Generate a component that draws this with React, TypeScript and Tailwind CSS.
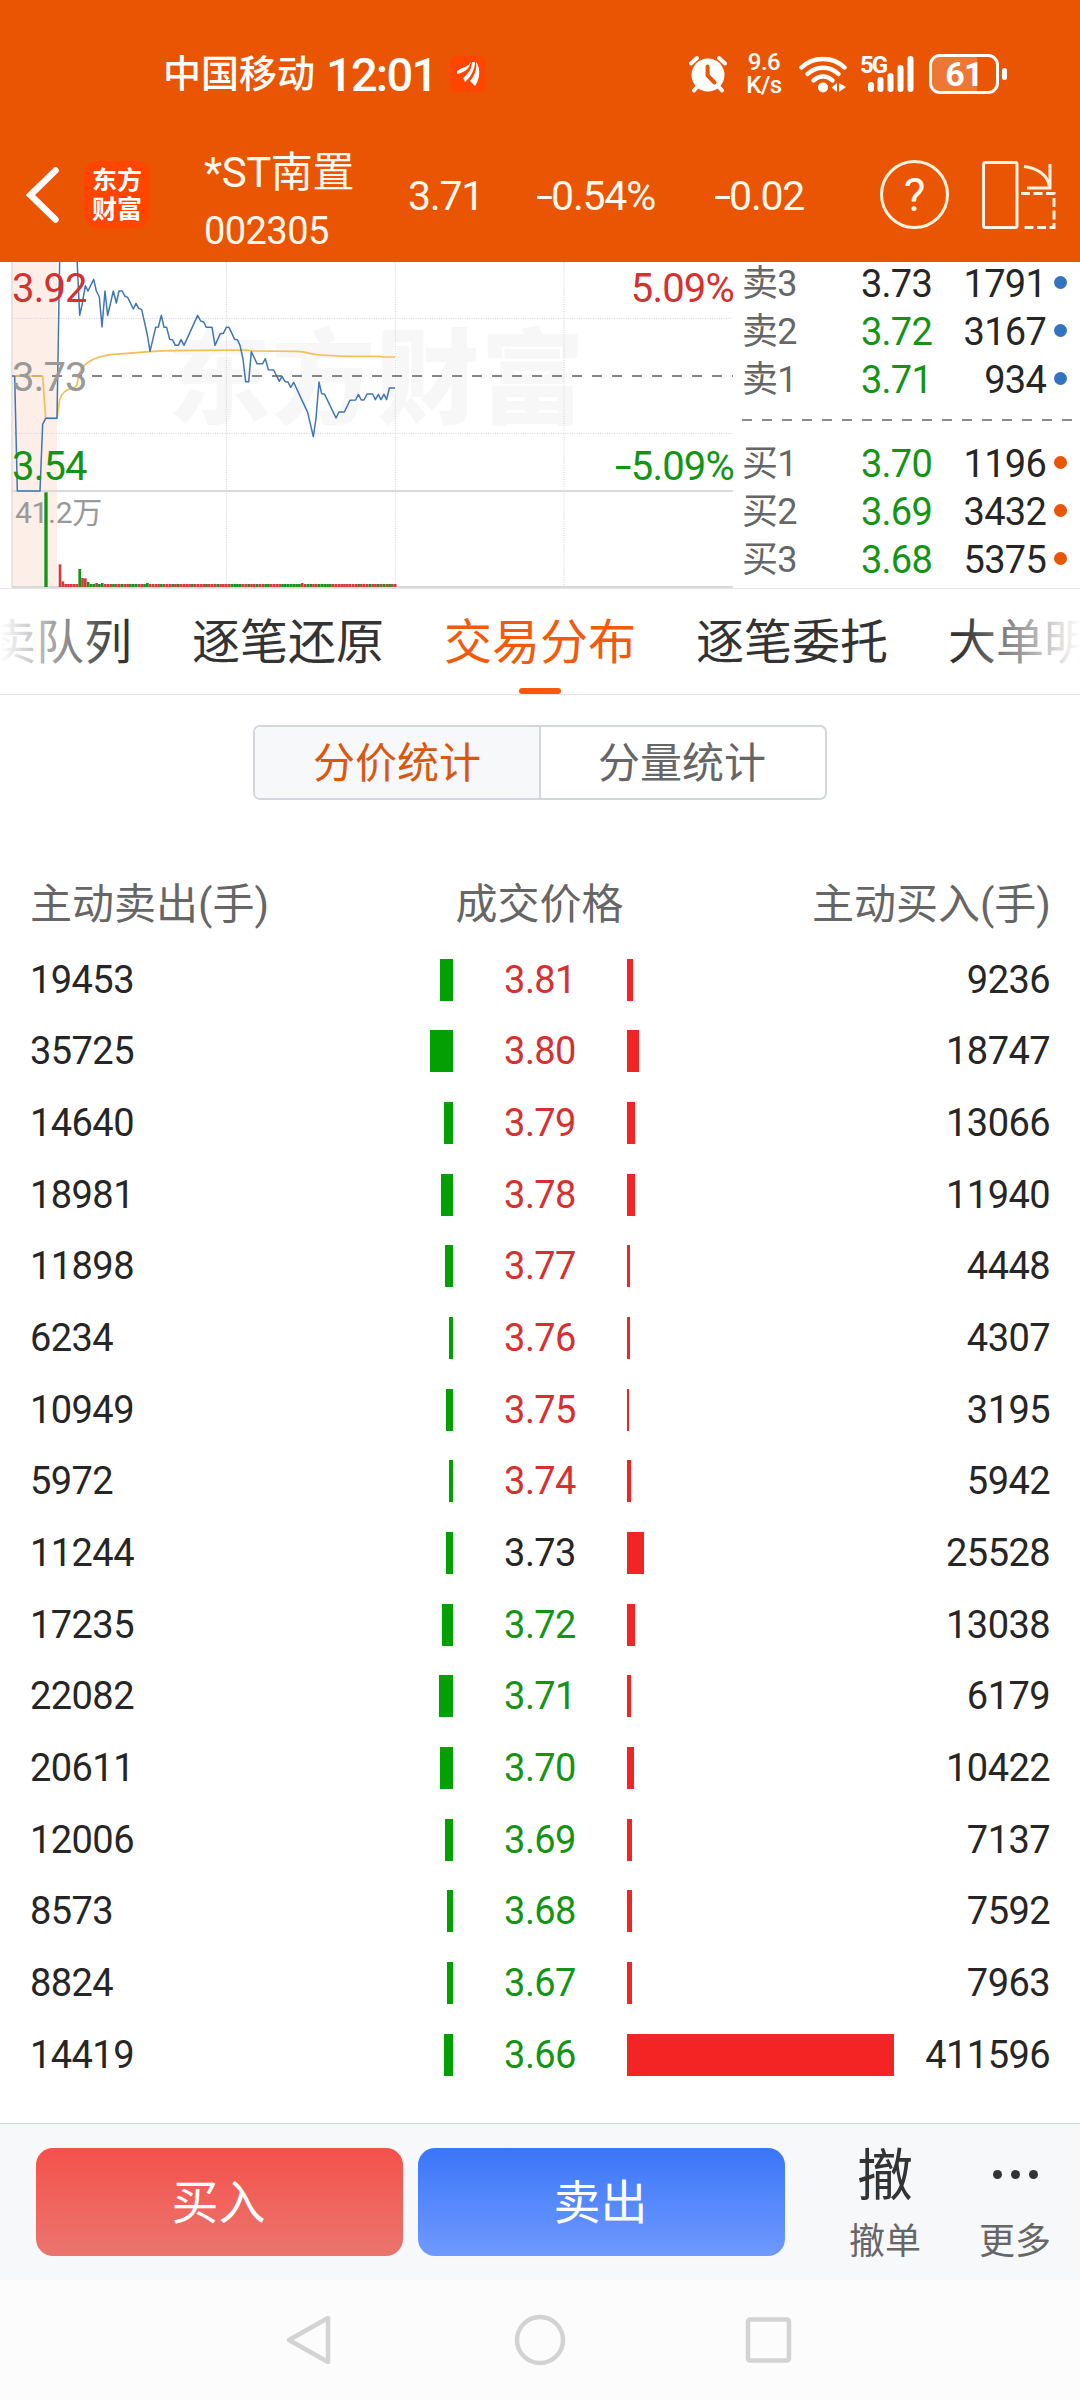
import { Fragment } from "react"
import clsx from "clsx"

const rows = [
  { sell: 19453, price: "3.81", buy: 9236 },
  { sell: 35725, price: "3.80", buy: 18747 },
  { sell: 14640, price: "3.79", buy: 13066 },
  { sell: 18981, price: "3.78", buy: 11940 },
  { sell: 11898, price: "3.77", buy: 4448 },
  { sell: 6234, price: "3.76", buy: 4307 },
  { sell: 10949, price: "3.75", buy: 3195 },
  { sell: 5972, price: "3.74", buy: 5942 },
  { sell: 11244, price: "3.73", buy: 25528 },
  { sell: 17235, price: "3.72", buy: 13038 },
  { sell: 22082, price: "3.71", buy: 6179 },
  { sell: 20611, price: "3.70", buy: 10422 },
  { sell: 12006, price: "3.69", buy: 7137 },
  { sell: 8573, price: "3.68", buy: 7592 },
  { sell: 8824, price: "3.67", buy: 7963 },
  { sell: 14419, price: "3.66", buy: 411596 },
]

const book = [
  { label: "卖3", price: "3.73", volume: 1791 },
  { label: "卖2", price: "3.72", volume: 3167 },
  { label: "卖1", price: "3.71", volume: 934 },
  { label: "买1", price: "3.70", volume: 1196 },
  { label: "买2", price: "3.69", volume: 3432 },
  { label: "买3", price: "3.68", volume: 5375 },
]

const tabs = ["买卖队列", "逐笔还原", "交易分布", "逐笔委托", "大单明细"]

const PREV_CLOSE = 3.73
const MAX_VOLUME = 411596
const MAX_BAR = 267

function priceColor(price: string) {
  const value = Number(price)
  if (value > PREV_CLOSE) return "text-[#d6302f]"
  if (value < PREV_CLOSE) return "text-[#149414]"
  return "text-[#262626]"
}

function barWidth(volume: number) {
  return (volume / MAX_VOLUME) * MAX_BAR
}

export default function App() {
  return (
    <div className="flex h-[2400px] w-[1080px] flex-col overflow-hidden bg-white font-[Roboto,'Noto_Sans_CJK_SC',sans-serif] text-[#262626]">
      <header className="flex h-[262px] flex-col bg-[#ea5504] text-[#fff8ee]">
        <StatusBar />
        <TitleBar />
      </header>

      <section className="flex h-[327px] border-b border-[#e4e4e4]">
        <PriceChart />
        <OrderBook />
      </section>

      <Tabs />

      {/* Segmented control */}
      <div className="mx-auto mt-[30px] flex h-[75px] w-[574px] overflow-hidden rounded-[7px] border-2 border-[#d3d6da] text-[42px] leading-[74px]">
        <button className="w-[286px] border-r-2 border-[#d3d6da] bg-[#f7f8fa] text-[#d9570f]">分价统计</button>
        <button className="flex-1 pr-[2px] text-[#666666]">分量统计</button>
      </div>

      <Distribution />

      <TradeBar />
      <SystemNav />
    </div>
  )
}

function StatusBar() {
  return (
    <div className="flex h-[148px] items-center pl-[163px] pr-[73px] text-white">
      <span className="text-[38px] font-medium leading-none">中国移动</span>
      <span className="ml-[11px] text-[47px] font-medium leading-none tracking-[-0.038em]">12:01</span>
      <svg viewBox="0 0 36 36" className="ml-[14px] h-9 w-9">
        <rect width="36" height="36" rx="7" fill="#ff4500" />
        <path d="M7 15 C12 11 17 12 21 6 C19 14 13 17 7 18Z" fill="#fff" />
        <path d="M13 22 C18 18 22 13 22 6 L25 6 C25 14 20 22 15 26Z" fill="#fff" />
        <path d="M20 25 C25 19 27 13 26 6 C31 12 30 23 25 30Z" fill="#fff" />
      </svg>

      <div className="ml-auto flex items-center">
        <svg viewBox="0 0 38 38" className="h-[38px] w-[38px]">
          <circle cx="19" cy="20" r="16.5" fill="#fff" />
          <path d="M2 8.5 L8 3 M36 8.5 L30 3" stroke="#fff" strokeWidth="4" strokeLinecap="round" />
          <path d="M9 31 L5 35.5 M29 31 L33 35.5" stroke="#fff" strokeWidth="4" strokeLinecap="round" />
          <path d="M18.6 11.5 V20.5 L25.5 27.5" fill="none" stroke="#ea5504" strokeWidth="4" strokeLinecap="round" />
        </svg>
        <div className="ml-[16px] flex w-[42px] flex-col items-center text-[24px] font-medium leading-[23px] tracking-[-0.02em]">
          <span>9.6</span>
          <span>K/s</span>
        </div>
        <svg viewBox="0 0 48 38" className="ml-[14px] h-[38px] w-12">
          <g fill="none" stroke="#fff" strokeWidth="4.5" strokeLinecap="round">
            <path d="M2.5 12.5 C14 1 34 1 45.5 12.5" />
            <path d="M8.5 19 C17 10.5 31 10.5 39.5 19" />
            <path d="M14.5 25.5 C20 20 28 20 33.5 25.5" />
          </g>
          <circle cx="24" cy="32.5" r="5" fill="#fff" />
          <path d="M38 28 V37 L32.5 32.5Z M40 28 L47 32 L40 37Z" fill="#fff" />
        </svg>
        <div className="relative ml-[13px] h-[38px] w-[56px]">
          <span className="absolute left-0 top-0 text-[24px] font-bold leading-[20px] tracking-[-0.08em]">5G</span>
          <svg viewBox="0 0 56 38" className="h-[38px] w-[56px]">
            <g stroke="#fff" strokeWidth="6" strokeLinecap="round">
              <path d="M11 30 V34 M20.5 25 V34 M30.5 21 V34 M40.5 13 V34 M50.5 4 V34" />
            </g>
          </svg>
        </div>
        <div className="relative ml-[13px] flex h-10 w-[70px] items-center justify-center overflow-hidden rounded-[11px] border-[3px] border-white">
          <div className="absolute inset-y-0 left-0 w-[70%] bg-white/20" />
          <span className="relative text-[34px] font-bold leading-none tracking-[-0.02em]">61</span>
        </div>
        <div className="ml-[3px] h-3 w-[5px] rounded-full bg-white" />
      </div>
    </div>
  )
}

function TitleBar() {
  return (
    <div className="flex h-[93px] items-center pl-[26px] pr-[24px]">
      <svg viewBox="0 0 34 56" className="h-14 w-[34px]">
        <path d="M29.5 3.5 L4.5 28 L29.5 52.5" fill="none" stroke="#fff" strokeWidth="6.5" strokeLinecap="round" strokeLinejoin="miter" />
      </svg>
      <div className="ml-6 flex h-[67px] w-[66px] flex-col items-center justify-center rounded-[14px] bg-[#ff4500] text-[25px] font-bold leading-[29px] text-white">
        <span>东方</span>
        <span>财富</span>
      </div>
      <div className="ml-[54px] mt-[12px] flex w-[204px] flex-col gap-[14px]">
        <span className="text-[42px] leading-[46px] tracking-[-0.01em]">*ST南置</span>
        <span className="text-[38px] leading-[42px] tracking-[-0.015em]">002305</span>
      </div>
      <div className="mt-[4px] flex text-[41px] leading-none tracking-[-0.03em]">
        <span className="w-[128px]">3.71</span>
        <span className="w-[178px]"><Minus />0.54%</span>
        <span className="w-[150px]"><Minus />0.02</span>
      </div>
      <div className="ml-auto flex items-center gap-[33px]">
        <div className="flex h-[69px] w-[69px] items-center justify-center rounded-full border-[3px] border-[#fff2df] text-[46px] leading-none">?</div>
        <svg viewBox="0 0 74 68" className="h-[68px] w-[74px]">
          <g fill="none" stroke="#fff2df" strokeWidth="3">
            <rect x="1.5" y="1.5" width="33.5" height="65" rx="2" />
            <path d="M42 5.5 C55 7 66 14 67.5 26" />
            <path d="M68 3 V27 H45" />
            <path d="M39 32.5 H72 V66.5 H39" strokeDasharray="9 3.5" />
          </g>
        </svg>
      </div>
    </div>
  )
}

function Minus() {
  return <span className="mr-[5px] inline-block origin-left scale-x-150">-</span>
}

const pricePath =
  "M44 363 L52 708 L120 708 L128 508 L137 490 L171 490 L179 10 M231 10 L239 181 L247 145 L256 92 L264 108 L281 73 L289 108 L298 126 L306 216 L315 108 L323 181 L340 108 L349 144 L357 108 L367 108 L374 123 L383 127 L400 162 L408 145 L416 160 L425 164 L433 199 L442 240 L450 289 L467 217 L475 216 L484 181 L492 217 L500 217 L509 253 L517 254 L526 271 L535 271 L543 254 L552 271 L593 181 L602 198 L611 201 L619 217 L636 217 L645 271 L661 236 L670 235 L679 217 L687 217 L704 253 L712 254 L720 271 L729 312 L737 380 L746 380 L754 290 L771 326 L788 326 L796 311 L805 344 L821 345 L838 379 L846 364 L855 380 L864 381 L872 397 L881 382 L923 472 L940 545 L948 490 L957 381 L965 416 L974 418 L1008 489 L1017 471 L1033 471 L1050 436 L1067 435 L1075 418 L1084 435 L1092 435 L1101 417 L1118 417 L1126 434 L1135 418 L1143 434 L1152 418 L1160 434 L1168 399 L1185 399"

const averagePath =
  "M44 363 L128 363 L137 490 L171 490 L179 435 C186 410 200 403 215 401 C240 395 228 375 242 345 C262 312 300 302 340 298 L450 290 L500 287 L600 286 L740 285 L760 288 L890 289 C920 290 930 298 960 300 L1040 304 L1140 304 L1146 306 L1185 306"

// One letter per minute: r = up, g = down
const volumeColors =
  "rrrrrrrgrrgggrggrrrgrrgrrgggrrggrrrrgrrrgrgrrrrgrrrrgrrrgrrrrggggrrgrrgrrggrrrrgggggggrrggrrgggggrrrrrrrrrgrrrgrrgrgrgrr"
const volumeHeights: Record<number, number> = { 0: 68, 1: 17, 7: 54, 8: 27, 9: 26, 10: 15, 13: 12, 15: 12, 31: 12, 86: 12 }

function PriceChart() {
  return (
    <div className="relative h-[326px] w-[735px]">
      {/* Drawn in thirds of a pixel */}
      <svg viewBox="0 21 2205 978" className="h-[326px] w-[735px]">
        <rect x="39" y="21" width="132" height="975" fill="#fdeee8" />
        <text x="502" y="484" fontSize="310" fontWeight="900" textLength="1250" fill="#f7f7f7">东方财富</text>
        <g stroke="#d2d2d2" strokeWidth="3" strokeDasharray="3 4">
          <path d="M679 21 V996 M1186 21 V996 M1692 21 V996" />
          <path d="M36 190 H2199 M36 535 H2199" />
        </g>
        <path d="M36 21 V996" stroke="#e0dede" strokeWidth="5" />
        <path d="M36 708 H2199 M36 996 H2199" stroke="#d9d9d9" strokeWidth="6" />
        <path d="M36 363 H2199" stroke="#858585" strokeWidth="6" strokeDasharray="30 30" />
        <path d={averagePath} fill="none" stroke="#f3bf56" strokeWidth="5" />
        <path d={pricePath} fill="none" stroke="#3f76b3" strokeWidth="4.5" strokeLinejoin="round" />
      </svg>
      <div className="absolute inset-0 text-[40px] leading-[40px] tracking-[-0.02em]">
        <span className="absolute left-[12px] top-[7px] text-[#d6302f]">3.92</span>
        <span className="absolute left-[12px] top-[96px] text-[#999999]">3.73</span>
        <span className="absolute left-[12px] top-[185px] text-[#149414]">3.54</span>
        <span className="absolute right-[1px] top-[7px] text-[#d6302f]">5.09%</span>
        <span className="absolute right-[1px] top-[185px] text-[#149414]"><Minus />5.09%</span>
        <span className="absolute left-[15px] top-[231px] text-[30px] tracking-[-0.01em] text-[#999999]">41.2万</span>
      </div>
      <svg viewBox="0 21 2205 978" className="absolute inset-0 h-[326px] w-[735px]">
        <rect x="133" y="712" width="10" height="284" fill="#149414" />
        {volumeColors.split("").map((color, i) => (
          <rect
            key={i}
            x={176 + i * 8.45}
            y={996 - (volumeHeights[i] ?? 9)}
            width="8"
            height={volumeHeights[i] ?? 9}
            fill={color === "r" ? "#d63a3a" : "#149414"}
          />
        ))}
      </svg>
    </div>
  )
}

function OrderBook() {
  return (
    <div className="-mt-[2px] w-[345px] pl-[7px]">
      {book.map((item, index) => (
        <Fragment key={item.label}>
          {index === 3 && (
            <svg viewBox="0 0 338 36" className="h-9 w-[338px]">
              <path d="M0 16 H331" stroke="#8a8a8a" strokeWidth="2" strokeDasharray="10 10" />
            </svg>
          )}
          <div className="flex h-12 items-center text-[38px] leading-none tracking-[-0.02em]">
            <span className="w-[96px] text-[36px] text-[#666666]">{item.label}</span>
            <span className={clsx("w-[94px] text-right", priceColor(item.price))}>{item.price}</span>
            <span className="w-[114px] text-right">{item.volume}</span>
            <span
              className={clsx(
                "mb-1 ml-[8px] h-[13px] w-[13px] rounded-full",
                index < 3 ? "bg-[#3273c2]" : "bg-[#ea5504]",
              )}
            />
          </div>
        </Fragment>
      ))}
    </div>
  )
}

function Tabs() {
  return (
    <nav className="relative h-[106px] overflow-hidden border-b border-[#e4e4e4]">
      <div className="-ml-[60px] flex w-[1200px] gap-[60px]">
        {tabs.map((tab) => (
          <div
            key={tab}
            className={clsx(
              "relative h-[105px] w-[192px] shrink-0 text-[48px] leading-[108px]",
              tab === "交易分布" ? "text-[#f25a0c]" : "text-[#333333]",
            )}
          >
            {tab}
            {tab === "交易分布" && (
              <span className="absolute bottom-0 left-[75px] h-[6px] w-[42px] rounded-full bg-[#f9570a]" />
            )}
          </div>
        ))}
      </div>
      <div className="absolute left-0 top-0 h-[105px] w-[120px] bg-gradient-to-r from-white to-white/0" />
      <div className="absolute right-0 top-0 h-[105px] w-[120px] bg-gradient-to-l from-white to-white/0" />
    </nav>
  )
}

function Distribution() {
  return (
    <section className="mt-[75px]">
      <div className="flex h-[69px] justify-between pl-[30px] pr-[29px] text-[42px] leading-[60px] text-[#666666]">
        <span className="w-[300px]">主动卖出(手)</span>
        <span>成交价格</span>
        <span className="w-[302px] text-right">主动买入(手)</span>
      </div>
      {rows.map((row) => (
        <div key={row.price} className="flex h-[71.67px] items-center text-[38px] leading-none tracking-[-0.015em]">
          <div className="flex w-[453px] items-center justify-between pl-[30px]">
            <span>{row.sell}</span>
            <span className="h-[42px] bg-[#03a003]" style={{ width: barWidth(row.sell) }} />
          </div>
          <span className={clsx("w-[174px] text-center", priceColor(row.price))}>{row.price}</span>
          <div className="flex flex-1 items-center justify-between pr-[30px]">
            <span className="h-[42px] bg-[#f22424]" style={{ width: barWidth(row.buy) }} />
            <span>{row.buy}</span>
          </div>
        </div>
      ))}
    </section>
  )
}

function TradeBar() {
  return (
    <div className="mt-auto flex h-[157px] border-t border-[#d3d6da] bg-[#f7f8fa] pl-9 pt-6">
      <button className="h-[108px] w-[367px] rounded-[17px] bg-gradient-to-b from-[#f4504a] to-[#eb746e] pr-[2px] text-[47px] leading-[109px] text-white">
        买入
      </button>
      <button className="ml-[15px] h-[108px] w-[367px] rounded-[17px] bg-gradient-to-b from-[#3a76f8] to-[#6e99ff] pr-[2px] text-[47px] leading-[109px] text-white">
        卖出
      </button>
      <div className="ml-[35px] flex w-[130px] flex-col items-center">
        <span className="h-[68px] text-[56px] leading-[56px] text-[#333333]">撤</span>
        <span className="text-[36px] leading-[52px] text-[#666666]">撤单</span>
      </div>
      <div className="flex w-[130px] flex-col items-center">
        <div className="flex h-[68px] gap-[9px] pt-[22px]">
          <span className="h-[9px] w-[9px] rounded-full bg-[#333333]" />
          <span className="h-[9px] w-[9px] rounded-full bg-[#333333]" />
          <span className="h-[9px] w-[9px] rounded-full bg-[#333333]" />
        </div>
        <span className="text-[36px] leading-[52px] text-[#666666]">更多</span>
      </div>
    </div>
  )
}

function SystemNav() {
  return (
    <div className="flex h-[120px] justify-center gap-[178px] bg-[#fcfcfc] pt-[34px]">
      <svg viewBox="0 0 52 52" className="h-[52px] w-[52px]">
        <path d="M44 4 V48 L5 26Z" fill="none" stroke="#d3d3d3" strokeWidth="4.5" strokeLinejoin="round" />
      </svg>
      <svg viewBox="0 0 52 52" className="h-[52px] w-[52px]">
        <circle cx="26" cy="26" r="23" fill="none" stroke="#d3d3d3" strokeWidth="4.5" />
      </svg>
      <svg viewBox="0 0 52 52" className="h-[52px] w-[52px]">
        <rect x="4" y="5.5" width="41" height="41" rx="2" fill="none" stroke="#d3d3d3" strokeWidth="4.5" />
      </svg>
    </div>
  )
}
